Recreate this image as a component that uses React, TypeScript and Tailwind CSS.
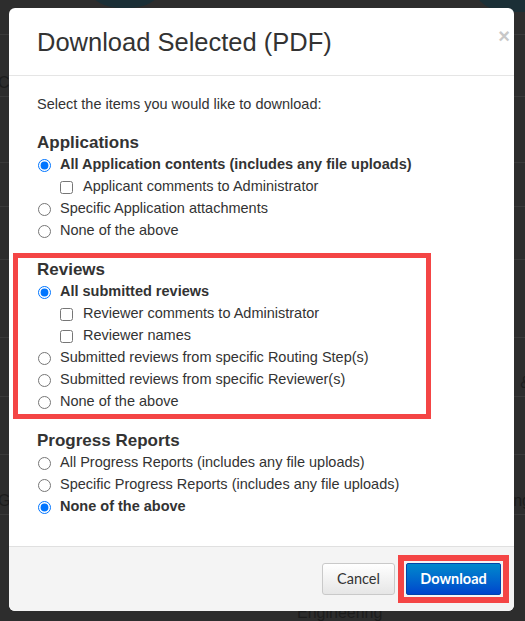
import React from 'react';

type Item = { label: string; kind: 'radio' | 'check'; checked?: boolean; bold?: boolean };

function Option({ item, name }: { item: Item; name: string }) {
  if (item.kind === 'check') {
    return (
      <label className="flex items-center h-[22px] pl-[23px]">
        <input type="checkbox" defaultChecked={item.checked} className="w-[13px] h-[13px] m-0" />
        <span className="ml-[10px]">{item.label}</span>
      </label>
    );
  }
  return (
    <label className="flex items-center h-[22px]">
      <input
        type="radio"
        name={name}
        defaultChecked={item.checked}
        className="w-[13px] h-[13px] ml-[1px] m-0 accent-[#0075ff]"
      />
      <span className={`ml-[9px] ${item.bold ? 'font-bold' : ''}`}>{item.label}</span>
    </label>
  );
}

function Group({ title, name, items }: { title: string; name: string; items: Item[] }) {
  return (
    <div>
      <h3 className="h-[22px] leading-[22px] text-[17px] font-bold">{title}</h3>
      {items.map((it) => (
        <Option key={it.label} item={it} name={name} />
      ))}
    </div>
  );
}

const applications: Item[] = [
  { label: 'All Application contents (includes any file uploads)', kind: 'radio', checked: true, bold: true },
  { label: 'Applicant comments to Administrator', kind: 'check' },
  { label: 'Specific Application attachments', kind: 'radio' },
  { label: 'None of the above', kind: 'radio' },
];

const reviews: Item[] = [
  { label: 'All submitted reviews', kind: 'radio', checked: true, bold: true },
  { label: 'Reviewer comments to Administrator', kind: 'check' },
  { label: 'Reviewer names', kind: 'check' },
  { label: 'Submitted reviews from specific Routing Step(s)', kind: 'radio' },
  { label: 'Submitted reviews from specific Reviewer(s)', kind: 'radio' },
  { label: 'None of the above', kind: 'radio' },
];

const progress: Item[] = [
  { label: 'All Progress Reports (includes any file uploads)', kind: 'radio' },
  { label: 'Specific Progress Reports (includes any file uploads)', kind: 'radio' },
  { label: 'None of the above', kind: 'radio', checked: true, bold: true },
];

// rows of the page that sits behind the dialog
const pageRows: { h: string; left?: string; right?: string }[] = [
  { h: 'h-[35px]' },
  { h: 'h-[62px]', left: 'C' },
  { h: 'h-[66px]' },
  { h: 'h-[44px]' },
  { h: 'h-[53px]' },
  { h: 'h-[78px]' },
  { h: 'h-[59px]', right: '&' },
  { h: 'h-[58px]' },
  { h: 'h-[60px]', left: 'G', right: 'ng' },
];

export default function App() {
  return (
    <div className="relative w-[525px] h-[621px] overflow-hidden bg-[#2d2d2d] font-['Liberation_Sans',Arial,sans-serif]">
      {/* page behind the dialog */}
      <div className="flex flex-col text-[16px] text-[#1c1c1c]">
        {pageRows.map((r, i) => (
          <div key={i} className={`${r.h} border-b border-[#3a3a3a] flex items-end justify-between pb-[1px]`}>
            <span className="ml-[-2px]">{r.left}</span>
            <span className="mr-[-6px]">{r.right}</span>
          </div>
        ))}
        <div className="pt-[86px] pl-[297px]">Engineering</div>
      </div>
      <div className="absolute left-[80px] top-[-70px] w-[90px] h-[78px] rounded-full bg-[#1b2f36]" />
      <div className="absolute left-[470px] top-[-60px] w-[120px] h-[72px] rounded-full bg-[#1b2f36]" />

      {/* dialog */}
      <div className="absolute left-[9px] top-[8px] w-[505px] h-[603px] bg-white rounded-[6px] overflow-hidden flex flex-col text-[#333] text-[14.5px]">
        <div className="relative h-[68px] shrink-0 border-b border-[#e5e5e5] pl-[28px] pr-[4px] flex items-center justify-between">
          <h2 className="text-[25.5px] leading-[30px] text-[#333] pt-[1px]">Download Selected (PDF)</h2>
          <span className="self-start mt-[18px] text-[20px] font-bold leading-[20px] text-[#c8c8c8]">×</span>
        </div>

        <div className="flex-1 pl-[28px] pt-[18px]">
          <p className="h-[20px] leading-[20px]">Select the items you would like to download:</p>
          <div className="mt-[18px]">
            <Group title="Applications" name="app" items={applications} />
          </div>
          <div className="mt-[11px] ml-[-24px] w-[418px] border-[5px] border-[#f44545] pl-[19px] pt-[1px] pb-[1px]">
            <Group title="Reviews" name="rev" items={reviews} />
          </div>
          <div className="mt-[11px]">
            <Group title="Progress Reports" name="prog" items={progress} />
          </div>
        </div>

        <div className="h-[65px] shrink-0 border-t border-[#e0e0e0] bg-[#f4f4f4] flex items-center justify-end pr-[5px] font-['Lato',sans-serif]">
          <button className="w-[73px] h-[32px] rounded-[3px] border border-[#c9c9c9] bg-gradient-to-b from-white to-[#e6e6e6] text-[14.5px] text-[#333]">
            Cancel
          </button>
          <div className="ml-[3px] border-[6px] border-[#f44545] p-[2px]">
            <button className="w-[95px] h-[32px] rounded-[2px] border border-[#0044aa] bg-gradient-to-b from-[#0088cc] to-[#0044cc] text-[14.5px] font-bold text-white">
              Download
            </button>
          </div>
        </div>
      </div>
    </div>
  );
}
